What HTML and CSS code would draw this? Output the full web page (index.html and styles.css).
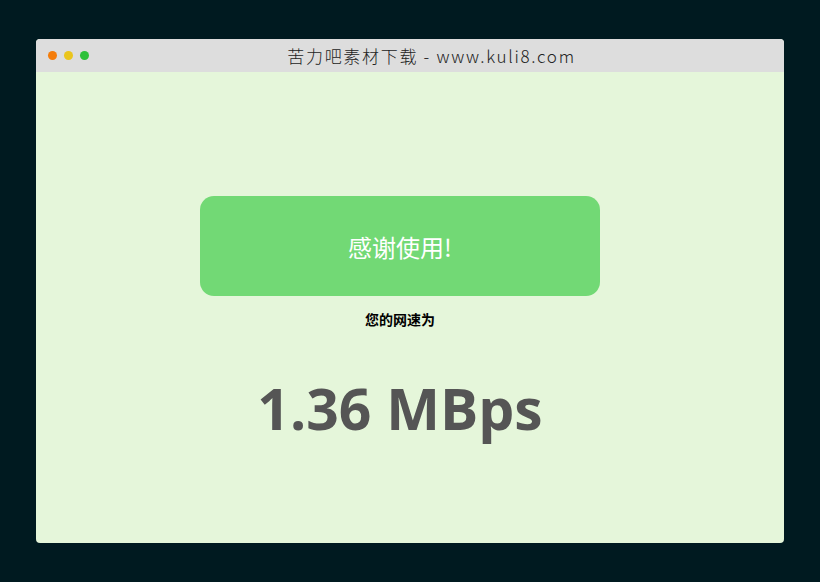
FILE: index.html
```html
<!DOCTYPE html>
<html lang="zh-CN">
<head>
    <meta charset="UTF-8">
    <meta name="viewport" content="width=device-width, initial-scale=1.0">
    <title>网速测试</title>
    <link rel="stylesheet" href="styles.css">
</head>
<body>
    <div class="window">
        <div class="title-bar">
            <div class="dots">
                <span class="dot dot-red"></span>
                <span class="dot dot-yellow"></span>
                <span class="dot dot-green"></span>
            </div>
            <div class="title">苦力吧素材下载 - www.kuli8.com</div>
        </div>
        <div class="content">
            <div class="thanks-btn">感谢使用!</div>
            <p class="label">您的网速为</p>
            <div class="speed">1.36 MBps</div>
        </div>
    </div>
</body>
</html>
```

FILE: styles.css
```css
body {
    margin: 0;
    padding: 39px 36px 0;
    background-color: #001a20;
    font-family: "Noto Sans CJK SC", sans-serif;
}

.window {
    width: 748px;
    height: 504px;
    background-color: #e5f6da;
    border-radius: 4px;
    overflow: hidden;
    display: flex;
    flex-direction: column;
}

.title-bar {
    height: 33px;
    background-color: #dddddd;
    display: flex;
    align-items: center;
    padding: 0 12px;
}

.dots {
    display: flex;
    gap: 7px;
}

.dot {
    width: 9px;
    height: 9px;
    border-radius: 50%;
}

.dot-red { background-color: #f47d0b; }
.dot-yellow { background-color: #eac51c; }
.dot-green { background-color: #2ec13a; }

.title {
    flex: 1;
    text-align: center;
    padding-left: 2px;
    font-size: 17px;
    font-weight: 300;
    color: #222;
    letter-spacing: 1.7px;
}

.content {
    flex: 1;
    display: flex;
    flex-direction: column;
    align-items: center;
    padding: 124px 20px 0 0;
}

.thanks-btn {
    width: 400px;
    height: 100px;
    border-radius: 14px;
    background-color: #72d975;
    color: #fff;
    font-size: 24px;
    display: flex;
    align-items: center;
    justify-content: center;
}

.label {
    margin: 12px 0 0;
    font-size: 14px;
    line-height: 22px;
    font-weight: bold;
    color: #000;
}

.speed {
    margin-top: 39px;
    font-family: "Open Sans", sans-serif;
    font-weight: bold;
    font-size: 57px;
    line-height: 78px;
    color: #555;
}
```
